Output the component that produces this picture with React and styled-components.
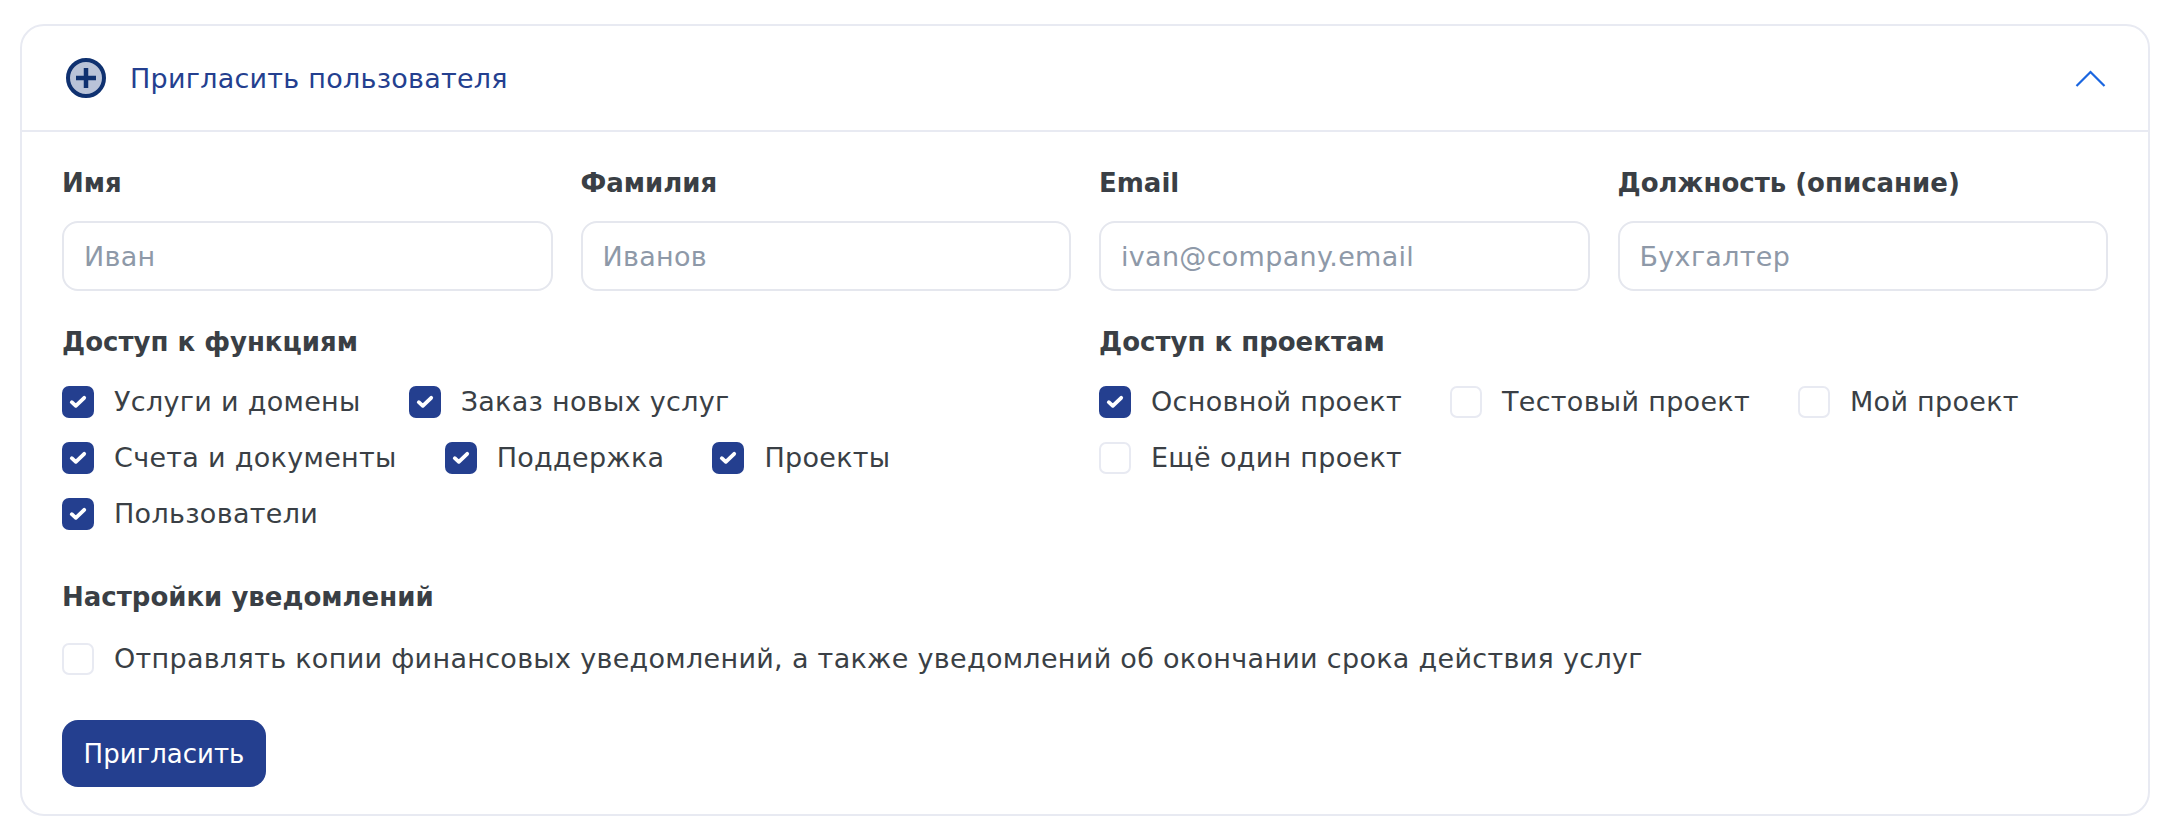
import React from 'react'
import styled, { createGlobalStyle } from 'styled-components'

const GlobalStyle = createGlobalStyle`
  html, body { margin: 0; padding: 0; background: #fff; }
  body { font-family: 'DejaVu Sans', 'Noto Sans', sans-serif; color: #3a3f45; }
  * { box-sizing: border-box; }
`

const functions = [
  { label: 'Услуги и домены', checked: true },
  { label: 'Заказ новых услуг', checked: true },
  { label: 'Счета и документы', checked: true },
  { label: 'Поддержка', checked: true },
  { label: 'Проекты', checked: true },
  { label: 'Пользователи', checked: true },
]

const projects = [
  { label: 'Основной проект', checked: true },
  { label: 'Тестовый проект', checked: false },
  { label: 'Мой проект', checked: false },
  { label: 'Ещё один проект', checked: false },
]

const fields = [
  { label: 'Имя', placeholder: 'Иван' },
  { label: 'Фамилия', placeholder: 'Иванов' },
  { label: 'Email', placeholder: 'ivan@company.email' },
  { label: 'Должность (описание)', placeholder: 'Бухгалтер' },
]

const Option = ({ label, checked }) => (
  <OptionRow>
    <Box $checked={checked}>
      {checked && (
        <svg width="18" height="14" viewBox="0 0 18 14" fill="none">
          <path d="M2.8 7.2L6.8 10.8L15.2 2.8" stroke="#fff" strokeWidth="3.8" strokeLinecap="round" strokeLinejoin="round" />
        </svg>
      )}
    </Box>
    <OptionText>{label}</OptionText>
  </OptionRow>
)

const App = () => {
  return (
    <Page>
      <GlobalStyle />
      <Card>
        <Header>
          <HeaderLeft>
            <svg width="44" height="44" viewBox="0 0 44 44" fill="none">
              <circle cx="22" cy="22" r="18" fill="#b9c3d8" stroke="#0f3170" strokeWidth="4" />
              <path d="M12 22H32M22 12V32" stroke="#0f3170" strokeWidth="4.5" />
            </svg>
            <HeaderTitle>Пригласить пользователя</HeaderTitle>
          </HeaderLeft>
          <svg width="31" height="17" viewBox="0 0 31 17" fill="none">
            <path d="M1.5 16L15.5 2L29.5 16" stroke="#1a66e0" strokeWidth="2.2" />
          </svg>
        </Header>
        <Body>
          <FieldsGrid>
            {fields.map((f) => (
              <Field key={f.label}>
                <Heading>{f.label}</Heading>
                <Input placeholder={f.placeholder} />
              </Field>
            ))}
          </FieldsGrid>
          <Groups>
            <div>
              <Heading>Доступ к функциям</Heading>
              <Options>
                {functions.map((o) => <Option key={o.label} {...o} />)}
              </Options>
            </div>
            <div>
              <Heading>Доступ к проектам</Heading>
              <Options>
                {projects.map((o) => <Option key={o.label} {...o} />)}
              </Options>
            </div>
          </Groups>
          <Notifications>
            <Heading>Настройки уведомлений</Heading>
            <Options $top={30}>
              <Option label="Отправлять копии финансовых уведомлений, а также уведомлений об окончании срока действия услуг" checked={false} />
            </Options>
          </Notifications>
          <SubmitButton>Пригласить</SubmitButton>
        </Body>
      </Card>
    </Page>
  )
}

export default App

const Page = styled.div`
  padding: 24px 20px 0;
  width: 2170px;
  height: 840px;
  overflow: hidden;
`
const Card = styled.div`
  border: 2px solid #e8eaf2;
  border-radius: 24px;
  height: 792px;
`
const Header = styled.div`
  display: flex;
  align-items: center;
  justify-content: space-between;
  height: 106px;
  padding: 0 42px 0 42px;
  border-bottom: 2px solid #e8eaf2;
`
const HeaderLeft = styled.div`
  display: flex;
  align-items: center;
  gap: 22px;
`
const HeaderTitle = styled.span`
  font-size: 27px;
  letter-spacing: 0.25px;
  color: #243f8f;
`
const Body = styled.div`
  padding: 35px 40px 0;
`
const FieldsGrid = styled.div`
  display: grid;
  grid-template-columns: repeat(4, 1fr);
  gap: 28px;
`
const Field = styled.div`
  display: flex;
  flex-direction: column;
  gap: 22px;
`
const Heading = styled.div`
  font-size: 26px;
  line-height: 32px;
  font-weight: 700;
  color: #3a3f45;
`
const Input = styled.input`
  height: 70px;
  width: 100%;
  border: 2px solid #e5e7ee;
  border-radius: 16px;
  padding: 0 20px;
  font: inherit;
  font-size: 27px;
  letter-spacing: 0.3px;
  outline: none;
  &::placeholder { color: #8e99a8; opacity: 1; }
`
const Groups = styled.div`
  display: grid;
  grid-template-columns: 1fr 1fr;
  gap: 28px;
  margin-top: 35px;
`
const Options = styled.div`
  display: flex;
  flex-wrap: wrap;
  gap: 24px 48px;
  margin-top: ${(p) => p.$top ?? 28}px;
`
const OptionRow = styled.label`
  display: flex;
  align-items: center;
  gap: 20px;
`
const Box = styled.span`
  display: flex;
  align-items: center;
  justify-content: center;
  width: 32px;
  height: 32px;
  border-radius: 7px;
  background: ${(p) => (p.$checked ? '#243f8f' : '#fff')};
  border: ${(p) => (p.$checked ? 'none' : '2px solid #e8eaf2')};
`
const OptionText = styled.span`
  font-size: 27px;
  line-height: 32px;
  letter-spacing: 0.3px;
  color: #3a3f45;
`
const Notifications = styled.div`
  margin-top: 51px;
`
const SubmitButton = styled.button`
  display: block;
  margin-top: 45px;
  width: 204px;
  height: 67px;
  border: none;
  border-radius: 16px;
  background: #243f8f;
  color: #fff;
  font: inherit;
  font-size: 26px;
`
